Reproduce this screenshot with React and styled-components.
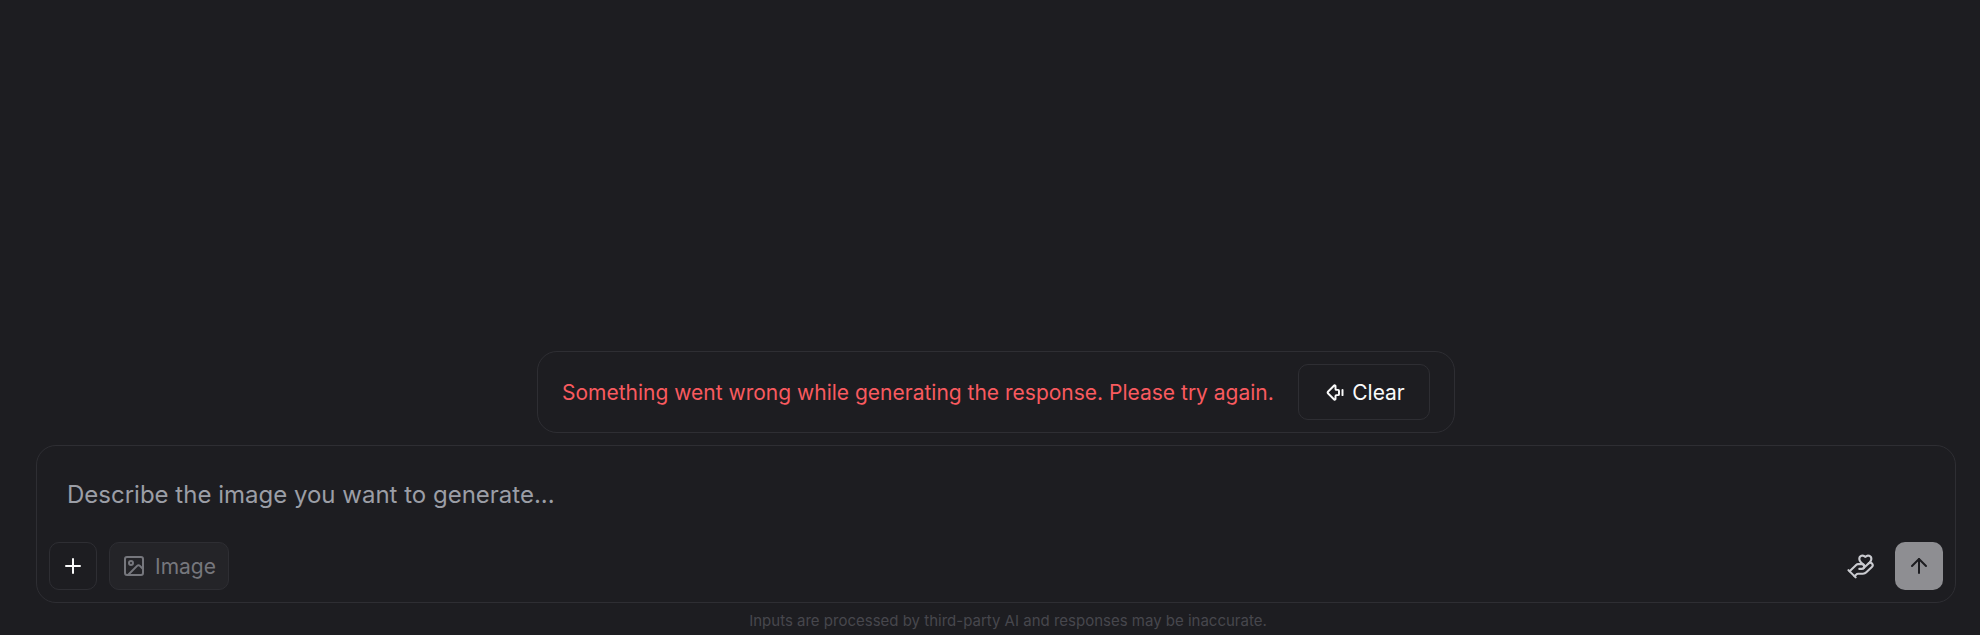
import { ArrowBigLeftDash, ArrowUp, HandHeart, Image, Plus } from "lucide-react";
import styled, { createGlobalStyle } from "styled-components";

const GlobalStyle = createGlobalStyle`
  html, body {
    margin: 0;
    height: 100%;
    background-color: #1d1d21;
  }
  * {
    box-sizing: border-box;
  }
`;

const Page = styled.div`
  height: 635px;
  display: flex;
  flex-direction: column;
  justify-content: flex-end;
  align-items: center;
  padding: 0 24px 0 36px;
  font-family: Inter, "Liberation Sans", sans-serif;
`;

const ErrorBox = styled.div`
  width: 918px;
  height: 82px;
  display: flex;
  align-items: center;
  justify-content: space-between;
  padding: 0 24px;
  margin-bottom: 12px;
  border: 1px solid #2e2e33;
  border-radius: 20px;
`;

const ErrorText = styled.span`
  padding-top: 2px;
  font-size: 21px;
  line-height: 28px;
  color: #f95a5f;
`;

const ClearButton = styled.button`
  width: 132px;
  height: 56px;
  display: flex;
  align-items: center;
  justify-content: center;
  gap: 6px;
  padding: 0 0 0 2px;
  background: transparent;
  border: 1px solid #2e2e33;
  border-radius: 10px;
  color: #fafafa;
  font-family: inherit;
  font-size: 21px;
`;

const Composer = styled.div`
  width: 100%;
  height: 158px;
  display: flex;
  flex-direction: column;
  justify-content: space-between;
  padding: 33px 12px 12px;
  border: 1px solid #2e2e33;
  border-radius: 20px;
`;

const Placeholder = styled.div`
  padding-left: 18px;
  font-size: 24px;
  line-height: 32px;
  color: #9b9ea6;
`;

const Toolbar = styled.div`
  display: flex;
  align-items: center;
  justify-content: space-between;
`;

const ToolGroup = styled.div`
  display: flex;
  align-items: center;
  gap: ${(props) => props.$gap || 12}px;
`;

const IconButton = styled.button`
  width: 48px;
  height: 48px;
  display: flex;
  align-items: center;
  justify-content: center;
  padding: 0;
  background: ${(props) => props.$fill || "transparent"};
  border: ${(props) => (props.$plain ? "none" : "1px solid #2e2e33")};
  border-radius: 10px;
  color: ${(props) => props.$color || "#fafafa"};
`;

const ImageButton = styled.button`
  width: 120px;
  height: 48px;
  display: flex;
  align-items: center;
  justify-content: center;
  gap: 9px;
  background: #242428;
  border: 1px solid #2e2e33;
  border-radius: 10px;
  color: #76777d;
  font-family: inherit;
  font-size: 21px;
`;

const Note = styled.div`
  height: 32px;
  padding: 3px 0 0 24px;
  display: flex;
  align-items: center;
  font-size: 15px;
  color: #47474d;
`;

export default function App() {
  return (
    <Page>
      <GlobalStyle />
      <ErrorBox>
        <ErrorText>Something went wrong while generating the response. Please try again.</ErrorText>
        <ClearButton>
          <ArrowBigLeftDash size={21} strokeWidth={2.25} />
          Clear
        </ClearButton>
      </ErrorBox>
      <Composer>
        <Placeholder>Describe the image you want to generate...</Placeholder>
        <Toolbar>
          <ToolGroup>
            <IconButton>
              <Plus size={24} strokeWidth={2} />
            </IconButton>
            <ImageButton>
              <Image size={24} strokeWidth={2} />
              Image
            </ImageButton>
          </ToolGroup>
          <ToolGroup $gap={11}>
            <IconButton $plain $color="#c9cacf">
              <HandHeart size={29} strokeWidth={1.75} />
            </IconButton>
            <IconButton $plain $fill="#8e8e92" $color="#1c1c20">
              <ArrowUp size={24} strokeWidth={2} />
            </IconButton>
          </ToolGroup>
        </Toolbar>
      </Composer>
      <Note>Inputs are processed by third-party AI and responses may be inaccurate.</Note>
    </Page>
  );
}
